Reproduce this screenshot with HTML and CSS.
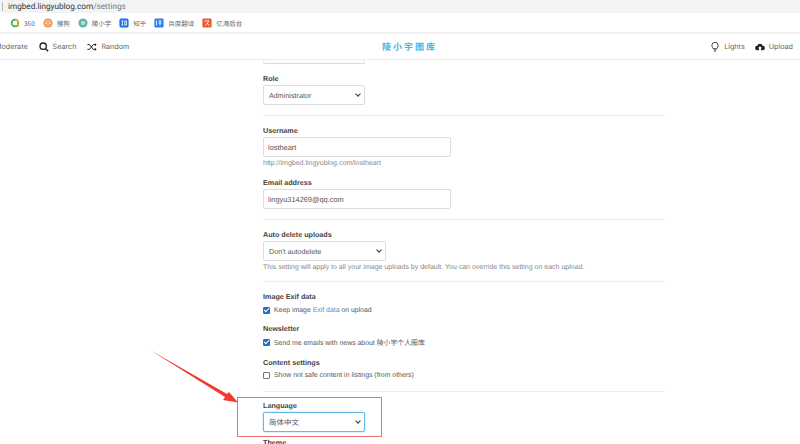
FILE: index.html
```html
<!DOCTYPE html>
<html lang="en">
<head>
    <meta charset="UTF-8">
    <meta name="viewport" content="width=device-width, initial-scale=1.0">
    <title>Settings</title>
    <link rel="stylesheet" href="styles.css">
</head>
<body>
    <div class="address-bar">
        <span class="address-sep"></span>
        <span class="url">imgbed.lingyublog.com<span class="url-path">/settings</span></span>
    </div>
    <div class="bookmarks">
        <span class="mark"><svg class="mark-icon" viewBox="0 0 12 12"><circle cx="6" cy="6" r="4" fill="none" stroke="#35b04a" stroke-width="2"/><path d="M6 2a4 4 0 0 1 4 4" fill="none" stroke="#f2a51f" stroke-width="2"/><path d="M8.500 8.500l2 2" stroke="#f2a51f" stroke-width="2"/></svg>360</span>
        <span class="mark"><svg class="mark-icon" viewBox="0 0 12 12"><circle cx="6" cy="6" r="5.500" fill="#f58a3c"/><circle cx="6" cy="6" r="3.600" fill="#fbd9b8"/><path d="M3.800 4.500h4.400M8 6H4M3.800 7.800h4.400" stroke="#ee7a28" stroke-width=".9"/></svg>搜狗</span>
        <span class="mark"><svg class="mark-icon" viewBox="0 0 12 12"><circle cx="6" cy="6" r="5.500" fill="#4fb6c9"/><circle cx="6" cy="6" r="2.600" fill="#d9d98a"/></svg>陵小宇</span>
        <span class="mark"><svg class="mark-icon" viewBox="0 0 12 12"><rect x=".5" y=".5" width="11" height="11" rx="2" fill="#1e6ff0"/><path d="M3 3.500h2.500M4 3.500v5M3 8.500h2.500M7 3.500h2v5H7z" stroke="#fff" fill="none"/></svg>知乎</span>
        <span class="mark"><svg class="mark-icon" viewBox="0 0 12 12"><rect x=".5" y=".5" width="11" height="11" rx="1.500" fill="#2b7ff2"/><path d="M3 3v6M5.500 3.500H9M7.200 3.500V9M5.500 6H9" stroke="#fff" fill="none"/></svg>百度翻译</span>
        <span class="mark"><svg class="mark-icon" viewBox="0 0 12 12"><rect x=".5" y=".5" width="11" height="11" rx="1.500" fill="#ef5a2a"/><path d="M3 3.500h5.500L4 9M6 6.500L9 9" stroke="#fff" fill="none"/></svg>亿海后台</span>
    </div>

    <header class="topbar">
        <nav class="nav-left">
            <span class="nav-item">Moderate</span>
            <span class="nav-item"><svg class="nav-icon" viewBox="0 0 12 12"><circle cx="5" cy="5" r="3.800" fill="none" stroke="#222" stroke-width="1.600"/><path d="M8 8l3 3" stroke="#222" stroke-width="1.800"/></svg>Search</span>
            <span class="nav-item"><svg class="nav-icon" viewBox="0 0 12 12"><path d="M.5 3.200H3l4.500 5.600h2.500M.5 8.800H3l4.500-5.600h2.500" fill="none" stroke="#222" stroke-width="1.200"/><path d="M9.500 1.200l2 2-2 2zM9.500 6.800l2 2-2 2z" fill="#222"/></svg>Random</span>
        </nav>
        <div class="logo">陵小宇图库</div>
        <nav class="nav-right">
            <span class="nav-item"><svg class="nav-icon" viewBox="0 0 12 12"><path d="M3.800 8C3.400 6.800 2.200 6 2.200 4.200a3.800 3.800 0 0 1 7.600 0C9.800 6 8.600 6.800 8.200 8z" fill="none" stroke="#222" stroke-width="1"/><path d="M4.500 9.500h3M5 11h2" stroke="#222"/></svg>Lights</span>
            <span class="nav-item"><svg class="nav-icon" viewBox="0 0 12 12"><path d="M3 10a2.700 2.700 0 0 1-.4-5.400 3.500 3.500 0 0 1 6.700 0A2.700 2.700 0 0 1 9 10H7.200V7.500h1.300L6 5 3.500 7.500h1.300V10z" fill="#222"/></svg>Upload</span>
        </nav>
    </header>

    <main class="settings">
        <div class="select select-role select-top"></div>

        <div class="field field-role">
            <label class="label">Role</label>
            <div class="select select-role">Administrator<span class="caret"></span></div>
        </div>
        <hr class="divider">

        <div class="field">
            <label class="label">Username</label>
            <div class="input">lostheart</div>
            <p class="hint">http://imgbed.lingyublog.com/lostheart</p>
        </div>
        <div class="field field-email">
            <label class="label">Email address</label>
            <div class="input">lingyu314269@qq.com</div>
        </div>
        <hr class="divider">

        <div class="field">
            <label class="label">Auto delete uploads</label>
            <div class="select select-delete">Don't autodelete<span class="caret"></span></div>
            <p class="hint">This setting will apply to all your image uploads by default. You can override this setting on each upload.</p>
        </div>
        <hr class="divider divider-tight">

        <div class="field">
            <label class="label">Image Exif data</label>
            <label class="check"><input type="checkbox" checked>Keep image&nbsp;<a href="#">Exif data</a>&nbsp;on upload</label>
        </div>
        <div class="field field-news">
            <label class="label">Newsletter</label>
            <label class="check"><input type="checkbox" checked>Send me emails with news about 陵小宇个人图库</label>
        </div>
        <div class="field field-content">
            <label class="label">Content settings</label>
            <label class="check check-flush"><input type="checkbox">Show not safe content in listings (from others)</label>
        </div>
        <hr class="divider divider-lang">

        <div class="field">
            <label class="label">Language</label>
            <div class="select select-role select-focus">简体中文<span class="caret"></span></div>
        </div>
        <div class="field field-theme">
            <label class="label">Theme</label>
        </div>
    </main>

    <div class="note-box"></div>
    <svg class="note-arrow" viewBox="0 0 100 60"><path d="M0 0L77 44L79 42L88 52.500L73 50L75 47z" fill="#ee3a30"/></svg>
</body>
</html>
```

FILE: styles.css
```css
* { box-sizing: border-box; }
html, body { height: 444px; overflow: hidden; }
body {
    margin: 0;
    background: #fff;
    color: #555;
    font-family: "Liberation Sans", "Noto Sans CJK SC", sans-serif;
    font-size: 7.200px;
    text-rendering: geometricPrecision;
}

.address-bar {
    height: 13px;
    background: #f1f3f4;
    display: flex;
    align-items: center;
    gap: 5px;
    padding-left: 2px;
    font-family: "Roboto", sans-serif;
    font-size: 8.200px;
}
.address-sep { width: 1px; height: 9px; background: #bbb; }
.url { color: #333; }
.url-path { color: #777; }

.bookmarks {
    height: 21px;
    background: #fff;
    border-bottom: 2px solid #f0f0f0;
    display: flex;
    align-items: center;
    gap: 8px;
    padding-left: 10px;
    font-family: "Noto Sans CJK SC", sans-serif;
    font-size: 6.500px;
    color: #666;
}
.mark { display: flex; align-items: center; gap: 4px; }
.mark-icon { width: 10px; height: 10px; }

.topbar {
    height: 26px;
    border-bottom: 1px solid #eee;
    display: grid;
    grid-template-columns: 1fr auto 1fr;
    align-items: center;
    font-family: "Inter", sans-serif;
    font-size: 7.200px;
    color: #666;
}
.nav-left, .nav-right { display: flex; gap: 11px; align-items: center; }
.nav-right { justify-content: flex-end; padding-right: 7px; gap: 10px; }
.nav-left { margin-left: -5px; }
.nav-item { display: flex; align-items: center; gap: 4px; }
.nav-icon { width: 10px; height: 10px; }
.logo {
    margin-left: 19px;
    color: #4ab4e6;
    font-family: "Noto Sans CJK SC", sans-serif;
    font-size: 9px;
    font-weight: 700;
    letter-spacing: 2px;
}

.settings { width: 402px; margin-left: 263px; }
.select, .input {
    height: 20px;
    border: 1px solid #ddd;
    border-radius: 2px;
    background: #fff;
    display: flex;
    align-items: center;
    padding-left: 5px;
    color: #555;
}
.select { position: relative; }
.select-role { width: 102px; }
.select-delete { width: 123px; }
.input { width: 188px; padding-left: 4px; font-size: 7.400px; }
.select-top { height: 4px; border-top: 0; }
.select-focus {
    border-color: #66b8e8;
    box-shadow: 0 0 2px #8fd0f2;
    font-size: 7.500px;
}
.caret {
    position: absolute;
    right: 4px;
    top: 6px;
    width: 4px;
    height: 4px;
    border-right: 1.500px solid #333;
    border-bottom: 1.500px solid #333;
    transform: rotate(45deg);
}

.field { display: flex; flex-direction: column; }
.field-role { margin-top: 8px; }
.label {
    height: 12px;
    margin-bottom: 1px;
    line-height: 14px;
    font-weight: 700;
    color: #444;
}
.hint { margin: 1px 0 0; line-height: 11px; color: #888; font-size: 7px; }
.field-email { margin-top: 7px; }
.divider { border: 0; border-top: 1px solid #eee; margin: 10px 0 8px; }
.divider-tight { margin-top: 8px; }
.divider-lang { margin-bottom: 7px; }

.check {
    display: flex;
    align-items: center;
    height: 12px;
    margin-top: 1px;
    font-size: 6.900px;
}
.check-flush { margin-top: 0; }
.check input {
    appearance: none;
    position: relative;
    flex: none;
    width: 7px;
    height: 7px;
    margin: 0 4px 0 0;
    border: 1px solid #777;
    border-radius: 1px;
    background: #fff;
}
.check input:checked { background: #1a6fd8; border-color: #1a6fd8; }
.check input:checked::after {
    content: "";
    position: absolute;
    left: 1px;
    top: -1px;
    width: 2px;
    height: 4px;
    border-right: 1px solid #fff;
    border-bottom: 1px solid #fff;
    transform: rotate(45deg);
}
.check a { color: #3a98d0; text-decoration: none; }
.field-news { margin-top: 6px; }
.field-content { margin-top: 8px; }
.field-theme { margin-top: 4px; }

.note-box {
    position: absolute;
    left: 237px;
    top: 397px;
    width: 145px;
    height: 40px;
    border: 1px solid #ee7070;
}
.note-arrow {
    position: absolute;
    left: 150px;
    top: 350px;
    width: 100px;
    height: 60px;
}
```
